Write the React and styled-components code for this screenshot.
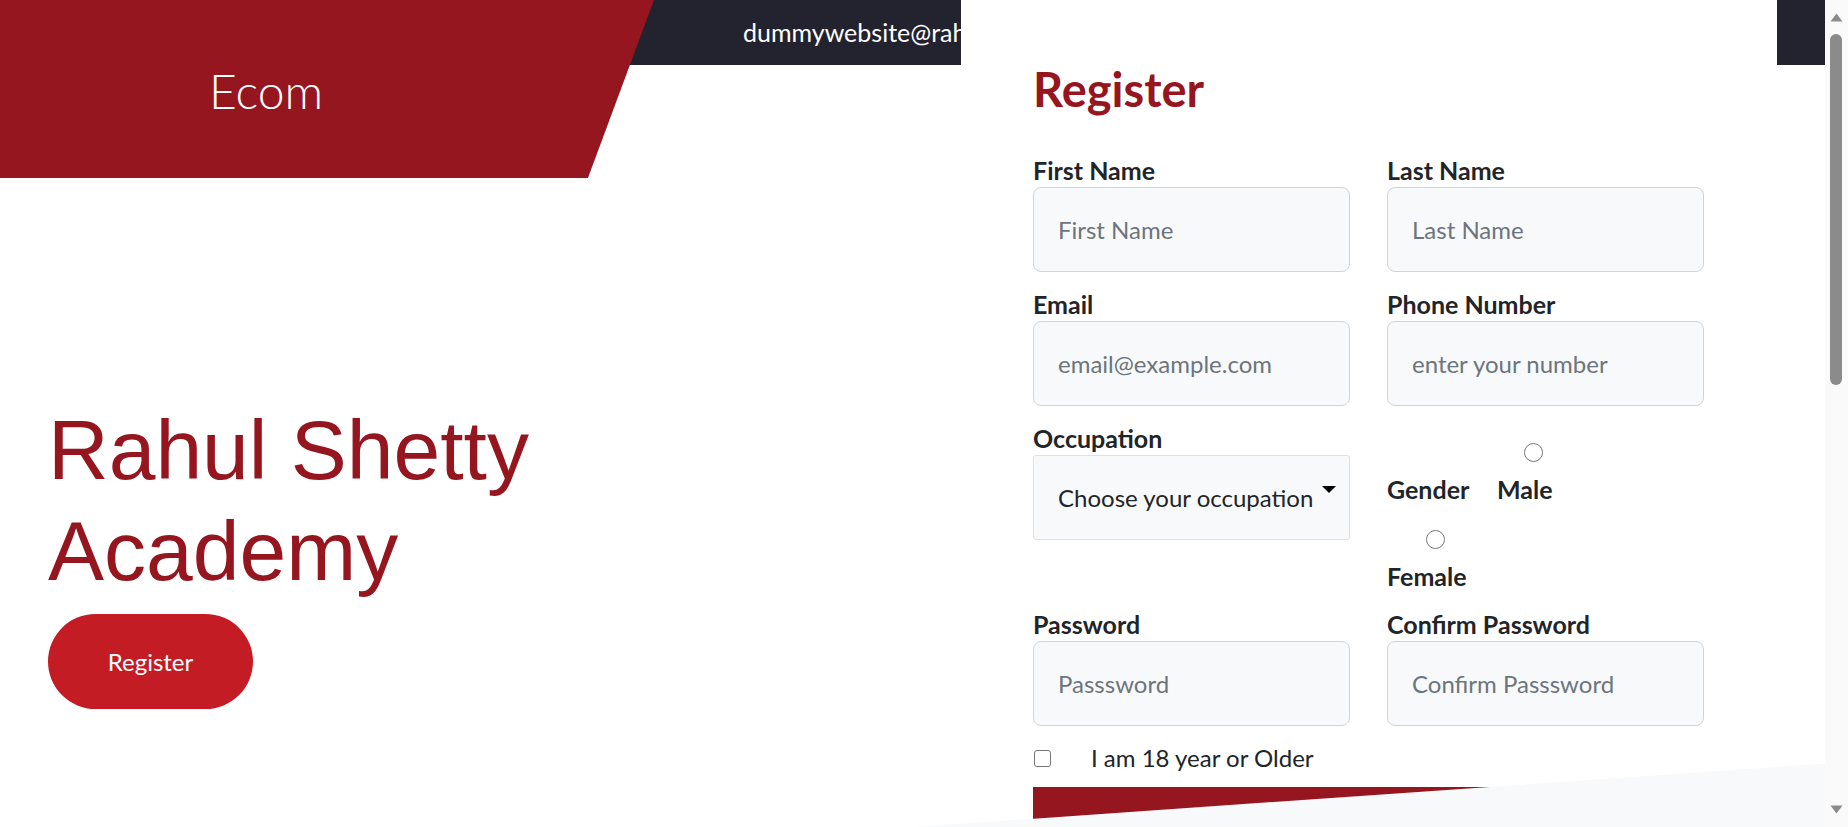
import React from "react";
import styled, { createGlobalStyle } from "styled-components";

const GlobalStyle = createGlobalStyle`
  html, body { margin: 0; padding: 0; background: #ffffff; }
  body {
    font-family: Lato, "Open Sans", "Noto Sans", sans-serif;
    color: #212529;
  }
  * { box-sizing: border-box; }
`;

const Shell = styled.div`
  display: flex;
  align-items: flex-start;
`;

const Page = styled.div`
  position: relative;
  flex: 1;
  min-width: 0;
`;

/* window scroll rail, as it appears at the right of the screen */
const Rail = styled.div`
  position: sticky;
  top: 0;
  flex: 0 0 23px;
  height: 100vh;
  display: flex;
  flex-direction: column;
  background: #fafafa;
`;

const RailButton = styled.div`
  flex: 0 0 34px;
  display: flex;
  justify-content: center;
  align-items: ${(p) => (p.$down ? "flex-start" : "flex-end")};
  padding: ${(p) => (p.$down ? "12px 0 0" : "0 0 12px")};
  svg { display: block; }
`;

const RailTrack = styled.div`
  flex: 1;
  padding: 0 6px 0 5px;
`;

const RailThumb = styled.div`
  height: 351px;
  border-radius: 6px;
  background: #8b8b8b;
`;

const Header = styled.header`
  display: flex;
  align-items: flex-start;
  height: 178px;
  background: linear-gradient(#23232f 0 65px, transparent 65px);
`;

const Logo = styled.div`
  flex: 0 0 654px;
  height: 178px;
  padding: 62px 0 0 209px;
  background: #961620;
  clip-path: polygon(0 0, 100% 0, 89.9% 100%, 0 100%);
  color: #ffffff;
  font-size: 48px;
  font-weight: 300;
  line-height: 1.2;
`;

const Contact = styled.div`
  margin-left: 89px;
  height: 65px;
  line-height: 65px;
  font-size: 25px;
  color: #ffffff;
  white-space: nowrap;
`;

const Hero = styled.section`
  padding-left: 48px;
`;

const HeroTitle = styled.h1`
  margin: 222px 0 0;
  max-width: 560px;
  font-family: "Liberation Sans", Arial, sans-serif;
  font-weight: 400;
  font-size: 84px;
  line-height: 1.2;
  color: #961620;
`;

const HeroButton = styled.button`
  display: block;
  margin-top: 12px;
  width: 205px;
  height: 95px;
  border: 0;
  border-radius: 48px;
  background: #c41c24;
  color: #ffffff;
  font-family: inherit;
  font-size: 24px;
  cursor: pointer;
`;

const FormPanel = styled.aside`
  position: absolute;
  top: 0;
  left: 961px;
  z-index: 1;
  width: 816px;
  padding: 61px 36px 40px 72px;
  background: #ffffff;
`;

const FormTitle = styled.h2`
  margin: 0 0 37px;
  font-size: 47px;
  font-weight: 700;
  line-height: 1.2;
  color: #961620;
`;

const FormGrid = styled.form`
  display: grid;
  grid-template-columns: 317px 317px;
  column-gap: 37px;
`;

const Field = styled.div`
  padding-bottom: 16px;
`;

const FieldLabel = styled.label`
  display: block;
  margin-bottom: 1px;
  font-size: 25px;
  font-weight: 700;
  line-height: 32px;
  color: #212529;
`;

const TextInput = styled.input`
  display: block;
  width: 100%;
  height: 85px;
  padding: 0 24px;
  border: 1px solid #ced4da;
  border-radius: 8px;
  background: #f8f9fa;
  font-family: inherit;
  font-size: 24px;
  color: #212529;
  outline: none;
  &::placeholder { color: #6c757d; }
`;

const SelectWrap = styled.div`
  position: relative;
  &::after {
    content: "";
    position: absolute;
    left: 289px;
    top: 31px;
    border-left: 7px solid transparent;
    border-right: 7px solid transparent;
    border-top: 7px solid #000000;
    pointer-events: none;
  }
`;

const Select = styled.select`
  display: block;
  width: 100%;
  height: 85px;
  padding: 0 24px;
  border: 1px solid #dee2e6;
  border-radius: 3px;
  background: #f8f9fa;
  appearance: none;
  font-family: inherit;
  font-size: 24px;
  color: #212529;
  outline: none;
`;

const GenderBlock = styled.div`
  padding-bottom: 16px;
`;

const GenderRow = styled.div`
  display: flex;
  align-items: flex-end;
  margin-bottom: 4px;
`;

const GroupLabel = styled.span`
  flex: 0 0 110px;
  font-size: 25px;
  font-weight: 700;
  line-height: 32px;
`;

const RadioOption = styled.label`
  display: inline-flex;
  flex-direction: column;
  align-items: center;
  font-size: 25px;
  font-weight: 700;
  line-height: 32px;
`;

const Radio = styled.input.attrs({ type: "radio" })`
  appearance: none;
  width: 19px;
  height: 19px;
  margin: 21px 0 11px 18px;
  border: 1.5px solid #767676;
  border-radius: 50%;
  background: #ffffff;
`;

const CheckRow = styled.label`
  grid-column: 1 / -1;
  display: flex;
  align-items: center;
  font-size: 24px;
  line-height: 32px;
`;

const Checkbox = styled.input.attrs({ type: "checkbox" })`
  appearance: none;
  width: 17px;
  height: 17px;
  margin: 0 40px 0 1px;
  border: 1.5px solid #767676;
  border-radius: 3px;
  background: #ffffff;
`;

const SubmitButton = styled.button`
  grid-column: 1 / -1;
  margin-top: 13px;
  height: 85px;
  border: 0;
  background: #961620;
  color: #ffffff;
  font-family: inherit;
  font-size: 24px;
`;

const Backdrop = styled.section`
  position: relative;
  z-index: 2;
  margin-top: 55px;
  height: 1030px;
  background: #f8f9fa;
  clip-path: polygon(0 127px, 100% 0, 100% 100%, 0 100%);
`;

export default function App() {
  return (
    <>
      <GlobalStyle />
      <Shell>
        <Page>
          <Header>
            <Logo>Ecom</Logo>
            <Contact>dummywebsite@rahulshettyacademy.com</Contact>
          </Header>
          <Hero>
            <HeroTitle>Rahul Shetty Academy</HeroTitle>
            <HeroButton type="button">Register</HeroButton>
          </Hero>
          <FormPanel>
            <FormTitle>Register</FormTitle>
            <FormGrid onSubmit={(e) => e.preventDefault()}>
              <Field>
                <FieldLabel>First Name</FieldLabel>
                <TextInput placeholder="First Name" />
              </Field>
              <Field>
                <FieldLabel>Last Name</FieldLabel>
                <TextInput placeholder="Last Name" />
              </Field>
              <Field>
                <FieldLabel>Email</FieldLabel>
                <TextInput placeholder="email@example.com" />
              </Field>
              <Field>
                <FieldLabel>Phone Number</FieldLabel>
                <TextInput placeholder="enter your number" />
              </Field>
              <Field>
                <FieldLabel>Occupation</FieldLabel>
                <SelectWrap>
                  <Select defaultValue="">
                    <option value="">Choose your occupation</option>
                    <option>Doctor</option>
                    <option>Student</option>
                    <option>Engineer</option>
                  </Select>
                </SelectWrap>
              </Field>
              <GenderBlock>
                <GenderRow>
                  <GroupLabel>Gender</GroupLabel>
                  <RadioOption>
                    <Radio name="gender" />
                    Male
                  </RadioOption>
                </GenderRow>
                <RadioOption>
                  <Radio name="gender" />
                  Female
                </RadioOption>
              </GenderBlock>
              <Field>
                <FieldLabel>Password</FieldLabel>
                <TextInput type="password" placeholder="Passsword" />
              </Field>
              <Field>
                <FieldLabel>Confirm Password</FieldLabel>
                <TextInput type="password" placeholder="Confirm Passsword" />
              </Field>
              <CheckRow>
                <Checkbox />
                I am 18 year or Older
              </CheckRow>
              <SubmitButton type="submit">Register</SubmitButton>
            </FormGrid>
          </FormPanel>
          <Backdrop />
        </Page>
        <Rail aria-hidden="true">
          <RailButton>
            <svg width="13" height="9" viewBox="0 0 13 9">
              <path d="M6.5 0.5 L12.5 8.5 L0.5 8.5 Z" fill="#8b8b8b" />
            </svg>
          </RailButton>
          <RailTrack>
            <RailThumb />
          </RailTrack>
          <RailButton $down>
            <svg width="13" height="9" viewBox="0 0 13 9">
              <path d="M0.5 0.5 L12.5 0.5 L6.5 8.5 Z" fill="#8b8b8b" />
            </svg>
          </RailButton>
        </Rail>
      </Shell>
    </>
  );
}
